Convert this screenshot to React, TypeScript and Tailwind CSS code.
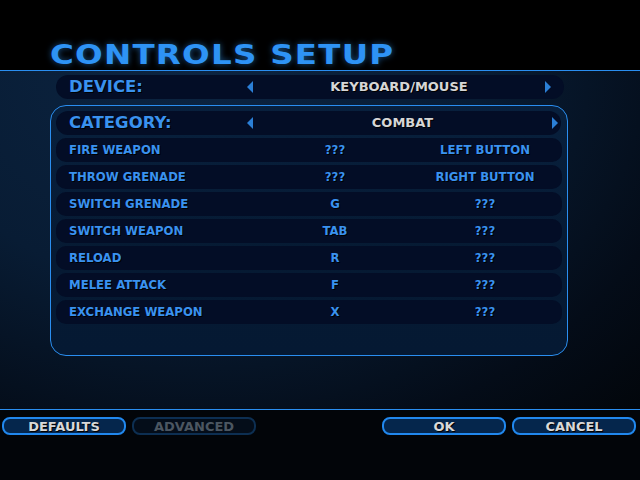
import React from "react";

const bindings = [
  { action: "FIRE WEAPON", primary: "???", secondary: "LEFT BUTTON" },
  { action: "THROW GRENADE", primary: "???", secondary: "RIGHT BUTTON" },
  { action: "SWITCH GRENADE", primary: "G", secondary: "???" },
  { action: "SWITCH WEAPON", primary: "TAB", secondary: "???" },
  { action: "RELOAD", primary: "R", secondary: "???" },
  { action: "MELEE ATTACK", primary: "F", secondary: "???" },
  { action: "EXCHANGE WEAPON", primary: "X", secondary: "???" },
];

function Arrow({ dir }: { dir: "left" | "right" }) {
  return (
    <svg width="6" height="12" viewBox="0 0 6 12" className="shrink-0">
      {dir === "left" ? (
        <polygon points="6,0 6,12 0,6" fill="#2b7fd6" />
      ) : (
        <polygon points="0,0 0,12 6,6" fill="#2b7fd6" />
      )}
    </svg>
  );
}

function Selector({ label, value, tail }: { label: string; value: string; tail: string }) {
  return (
    <div className="flex h-[24px] items-center rounded-full bg-[#030d26]">
      <span className="w-[191px] pl-[13px] text-[16.5px] font-bold text-[#3a92ef] [text-shadow:1px_1px_0_#000]">
        {label}
      </span>
      <Arrow dir="left" />
      <span className="flex-1 text-center text-[13px] font-bold text-[#d6d6d6] [text-shadow:1px_1px_0_#000]">
        {value}
      </span>
      <Arrow dir="right" />
      <span className={tail} />
    </div>
  );
}

function FooterButton({ children, disabled }: { children: React.ReactNode; disabled?: boolean }) {
  return (
    <button
      className={
        disabled
          ? "h-[18px] w-[124px] rounded-[8px] border-2 border-[#0d2f52] bg-[#040d19] text-[13px] font-bold leading-none text-[#4b5661]"
          : "h-[18px] w-[124px] rounded-[8px] border-2 border-[#2188ee] bg-[#05264c] text-[13px] font-bold leading-none text-[#d8d8d8] [text-shadow:1px_1px_0_#000]"
      }
    >
      {children}
    </button>
  );
}

export default function App() {
  return (
    <div className="flex h-[480px] w-[640px] flex-col bg-[#020509] font-['DejaVu_Sans',sans-serif]">
      <div className="flex h-[70px] items-end bg-black pb-[2px] pl-[50px]">
        <h1 className="origin-left scale-x-[1.25] text-[26px] leading-none font-semibold tracking-[1px] text-[#2e93f5] [text-shadow:0_0_6px_rgba(46,147,245,0.55)]">
          CONTROLS SETUP
        </h1>
      </div>
      <div className="h-px bg-[#2a8ef0]" />

      <main className="h-[338px] bg-[radial-gradient(ellipse_at_30%_0%,#0c2441_0%,#081c34_45%,#040c18_80%,#02060b_100%)] pt-[4px]">
        <div className="ml-[56px] w-[508px]">
          <Selector label="DEVICE:" value="KEYBOARD/MOUSE" tail="w-[13px]" />
        </div>

        <section className="mt-[6px] ml-[50px] h-[251px] w-[518px] rounded-[16px] border border-[#2a8ef0] bg-[linear-gradient(180deg,#08203d_0%,#061a33_60%,#051933_100%)] px-[5px] pt-[5px]">
          <div className="flex flex-col gap-[3px]">
            <div className="pr-[1px]">
              <Selector label="CATEGORY:" value="COMBAT" tail="w-[3px]" />
            </div>
            {bindings.map((b) => (
              <div
                key={b.action}
                className="flex h-[24px] items-center rounded-[10px] bg-[#030d26] font-['DejaVu_Sans_Condensed','DejaVu_Sans',sans-serif] text-[13px] font-bold text-[#3a92ef] [text-shadow:1px_1px_0_#000]"
              >
                <span className="w-[234px] pl-[13px]">{b.action}</span>
                <span className="w-[90px] text-center">{b.primary}</span>
                <span className="w-[30px]" />
                <span className="w-[150px] text-center">{b.secondary}</span>
              </div>
            ))}
          </div>
        </section>
      </main>

      <div className="h-px bg-[#2a8ef0]" />
      <footer className="flex gap-[6px] pt-[7px] pr-[4px] pl-[2px]">
        <FooterButton>DEFAULTS</FooterButton>
        <FooterButton disabled>ADVANCED</FooterButton>
        <div className="flex-1" />
        <FooterButton>OK</FooterButton>
        <FooterButton>CANCEL</FooterButton>
      </footer>
    </div>
  );
}
